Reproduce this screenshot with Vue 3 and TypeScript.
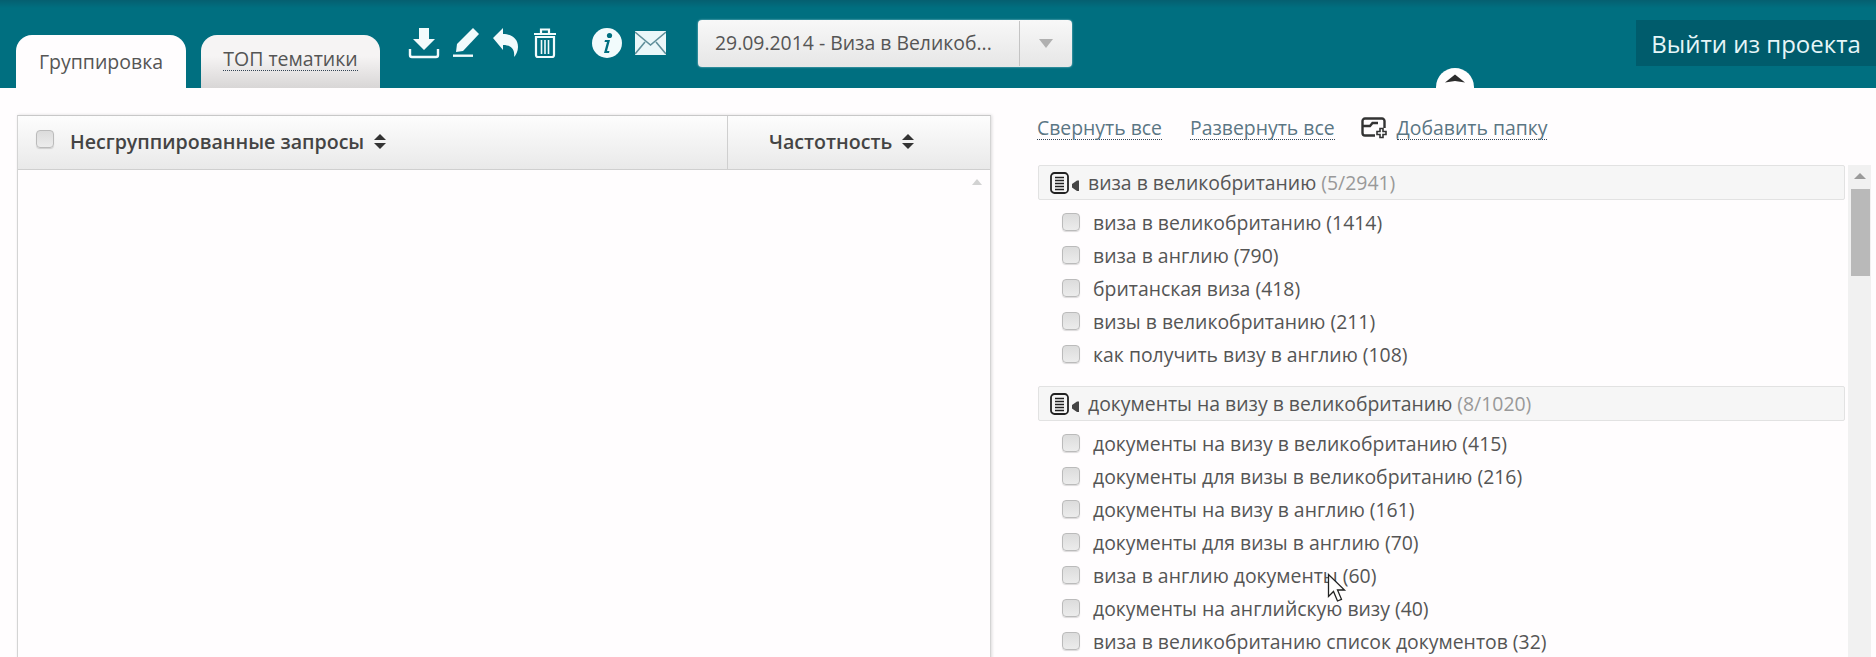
<script setup lang="ts">
interface Group {
  title: string;
  count: string;
  items: string[];
}

const groups: Group[] = [
  {
    title: 'виза в великобританию',
    count: '(5/2941)',
    items: [
      'виза в великобританию (1414)',
      'виза в англию (790)',
      'британская виза (418)',
      'визы в великобританию (211)',
      'как получить визу в англию (108)',
    ],
  },
  {
    title: 'документы на визу в великобританию',
    count: '(8/1020)',
    items: [
      'документы на визу в великобританию (415)',
      'документы для визы в великобританию (216)',
      'документы на визу в англию (161)',
      'документы для визы в англию (70)',
      'виза в англию документы (60)',
      'документы на английскую визу (40)',
      'виза в великобританию список документов (32)',
    ],
  },
];
</script>

<template>
  <div class="page">
    <header class="topbar">
      <nav class="tabs">
        <a class="tab active">Группировка</a>
        <a class="tab"><span class="dotted">ТОП тематики</span></a>
      </nav>

      <div class="tools">
        <svg width="32" height="32" viewBox="0 0 32 32" fill="#f2fbfc">
          <path d="M11 1h10v11h6L16 23 5 12h6z" />
          <path d="M2 22v6a2 2 0 0 0 2 2h24a2 2 0 0 0 2-2v-6" fill="none" stroke="#f2fbfc" stroke-width="2.4" />
        </svg>
        <svg width="28" height="32" viewBox="0 0 28 32" fill="#f2fbfc">
          <path d="M21 1l6 6L11 24l-7 1 1-8z" />
          <rect x="1" y="27.5" width="20" height="2.4" />
        </svg>
        <svg width="28" height="32" viewBox="0 0 28 32" fill="#f2fbfc">
          <path d="M1 11 11 1v6c9 0 15 5 15 13 0 4-2 8-4 10 1-7-2-12-11-12v5z" />
        </svg>
        <svg width="26" height="32" viewBox="0 0 26 32" fill="none" stroke="#f2fbfc" stroke-width="2.2">
          <path d="M2 7h22M9 6V2.500h8V6" />
          <path d="M4 10h18v18a2 2 0 0 1-2 2H6a2 2 0 0 1-2-2z" />
          <path d="M9.500 13v14M13 13v14M16.500 13v14" stroke-width="1.600" />
        </svg>
        <svg class="info" width="32" height="32" viewBox="0 0 32 32">
          <circle cx="16" cy="16" r="15" fill="#f2fbfc" />
          <circle cx="18.500" cy="8.500" r="2.600" fill="#006f80" />
          <path d="M14 13h5l-3 11h2.500l-.5 2h-5l3-11h-2.500z" fill="#006f80" />
        </svg>
        <svg class="mail" width="31" height="24" viewBox="0 0 31 24">
          <rect width="31" height="24" fill="#eaf7f9" />
          <path d="M0 1l15.500 13L31 1M0 23l10-12M31 23 21 11" fill="none" stroke="#5f8f9a" stroke-width="1.600" />
        </svg>
      </div>

      <div class="select">
        <span class="select-text">29.09.2014 - Виза в Великоб...</span>
        <span class="select-arrow"><i></i></span>
      </div>

      <a class="leave">Выйти из проекта</a>
      <span class="collapse">
        <svg width="20" height="9" viewBox="0 0 20 9"><path d="M0 8.500 10 .5l10 8-10-1.500z" fill="#2c2c2c" /></svg>
      </span>
    </header>

    <main class="content">
      <section class="queries">
        <div class="queries-head">
          <div class="col-name">
            <span class="check"></span>
            <b>Несгруппированные запросы</b>
            <span class="sort"></span>
          </div>
          <div class="col-freq">
            <b>Частотность</b>
            <span class="sort"></span>
          </div>
        </div>
        <div class="queries-body">
          <i class="up-arrow"></i>
        </div>
      </section>

      <section class="folders">
        <div class="actions">
          <a class="dotted">Свернуть все</a>
          <a class="dotted">Развернуть все</a>
          <span class="add">
            <svg width="28" height="22" viewBox="0 0 28 22" fill="none" stroke="#333" stroke-width="2.400">
              <path d="M14 18.500H4a2.500 2.500 0 0 1-2.500-2.500V4A2.500 2.500 0 0 1 4 1.500h17A2.500 2.500 0 0 1 23.500 4v7" />
              <path d="M1.500 9H9l2.500-3H17" />
              <path d="M19 11.500h3v3h3v3h-3v3h-3v-3h-3v-3h3z" stroke-width="1.600" fill="#fff" />
            </svg>
            <a class="dotted">Добавить папку</a>
          </span>
        </div>

        <div class="folders-scroll">
          <div class="list">
            <div v-for="group in groups" :key="group.title" class="group">
              <div class="group-head">
                <svg width="30" height="22" viewBox="0 0 30 22" fill="none" stroke="#222">
                  <rect x="1" y="1" width="17" height="20" rx="3.500" stroke-width="1.800" />
                  <path d="M5 5.500h9M5 8.500h9M5 11.500h9M5 14.500h9M5 17.500h9" stroke-width="1.300" />
                  <path d="M29 8.500v10.500h-2l-5-3.500v-3.500l5-3.500z" fill="#444" stroke="none" />
                </svg>
                <span>{{ group.title }} <em>{{ group.count }}</em></span>
              </div>
              <ul>
                <li v-for="item in group.items" :key="item">
                  <span class="check small"></span>
                  {{ item }}
                </li>
              </ul>
            </div>
          </div>
          <div class="scrollbar">
            <i class="up-arrow dark"></i>
            <div class="thumb"></div>
          </div>
        </div>
      </section>
    </main>

    <svg class="cursor" width="21" height="30" viewBox="0 0 21 30">
      <path d="M1.500 1.500v22l5-5 4 9.500 4-1.700-4-9.300h7z" fill="#fff" stroke="#222" stroke-width="1.300" />
    </svg>
  </div>
</template>

<style scoped>
.page {
  position: relative;
  width: 1876px;
  height: 657px;
  overflow: hidden;
  background: #fffdfe;
  font-family: "Open Sans", "Noto Sans", sans-serif;
  color: #555;
}

.topbar {
  position: relative;
  display: flex;
  align-items: flex-start;
  height: 88px;
  box-sizing: border-box;
  padding-left: 16px;
  background: linear-gradient(#055f70 0, #006f80 8px);
}

.tabs {
  display: flex;
  gap: 15px;
  margin-top: 35px;
}

.tab {
  display: flex;
  align-items: flex-start;
  justify-content: center;
  box-sizing: border-box;
  width: 170px;
  height: 53px;
  padding-top: 13px;
  border-radius: 16px 16px 0 0;
  font-size: 19.5px;
  color: #555;
  background: #fffdfe;
}

.tab:not(.active) {
  width: 179px;
  background: linear-gradient(#f6f4f4 40%, #d8d6d6);
}

.dotted {
  border-bottom: 1px dotted #345;
  line-height: 22px;
}

.tools {
  display: flex;
  align-items: center;
  gap: 12px;
  margin: 27px 0 0 28px;
}

.info {
  margin-left: 21px;
}

.select {
  display: flex;
  box-sizing: border-box;
  width: 374px;
  height: 47px;
  margin: 20px 0 0 32px;
  border-radius: 4px;
  background: linear-gradient(#f8f8f8, #e6e6e6);
  box-shadow: 0 0 2px rgb(210 240 245 / 80%);
  font-size: 19.4px;
  color: #555;
}

.select-text {
  flex: 1;
  padding-left: 17px;
  line-height: 46px;
  white-space: nowrap;
}

.select-arrow {
  display: flex;
  align-items: center;
  justify-content: center;
  flex: none;
  width: 52px;
  margin: 1px 0;
  border-left: 1px solid #c4c4c4;
}

.select-arrow i {
  border: 7px solid transparent;
  border-top: 9px solid #b0b0b0;
  border-bottom: 0;
}

.leave {
  display: flex;
  align-items: center;
  justify-content: center;
  width: 240px;
  height: 46px;
  margin: 20px 0 0 auto;
  background: #005c6c;
  color: #e6f6f8;
  font-size: 24px;
}

.collapse {
  position: absolute;
  left: 1436px;
  bottom: 0;
  display: flex;
  align-items: center;
  justify-content: center;
  width: 38px;
  height: 20px;
  border-radius: 19px 19px 0 0;
  background: #fffdfe;
}

.content {
  display: flex;
  align-items: flex-start;
}

.queries {
  box-sizing: border-box;
  width: 974px;
  height: 569px;
  margin: 27px 0 0 17px;
  border: 1px solid #d4d4d4;
  border-bottom: 0;
  border-top-color: #c8c8c8;
  box-shadow: 1px 0 3px rgb(0 0 0 / 14%);
}

.queries-head {
  display: flex;
  height: 53px;
  border-bottom: 1px solid #cfcfcf;
  background: linear-gradient(#fdfdfd, #e9e9e9);
  color: #444;
  font-size: 19.6px;
}

.queries-head b {
  font-weight: 600;
}

.col-name {
  display: flex;
  align-items: center;
  box-sizing: border-box;
  width: 710px;
  padding: 0 0 2px 18px;
  border-right: 1px solid #cfcfcf;
}

.col-name .check {
  margin: -6px 16px 0 0;
}

.col-freq {
  display: flex;
  flex: 1;
  align-items: center;
  padding: 0 0 2px 41px;
}

.sort {
  position: relative;
  width: 12px;
  height: 15px;
  margin-left: 10px;
}

.sort::before,
.sort::after {
  content: "";
  position: absolute;
  left: 0;
  border: 6px solid transparent;
}

.sort::before {
  top: 0;
  border-bottom: 6.500px solid #333;
  border-top: 0;
}

.sort::after {
  bottom: 0;
  border-top: 6.500px solid #333;
  border-bottom: 0;
}

.check {
  flex: none;
  box-sizing: border-box;
  width: 18px;
  height: 18px;
  border: 1px solid #bbb;
  border-radius: 4px;
  background: linear-gradient(#dcdcdc, #ececec);
  box-shadow: 0 1px 1px rgb(0 0 0 / 14%);
}

.queries-body {
  display: flex;
  justify-content: flex-end;
  padding: 9px 8px 0 0;
}

.up-arrow {
  display: block;
  width: 0;
  border: 5px solid transparent;
  border-bottom: 6px solid #d2d2d2;
  border-top: 0;
}

.up-arrow.dark {
  margin: 0 auto;
  border-width: 0 6px 6px;
  border-bottom-color: #9a9a9a;
}

.folders {
  flex: 1;
  padding: 25px 0 0 46px;
}

.actions {
  display: flex;
  align-items: center;
  gap: 28px;
  height: 30px;
  font-size: 19.4px;
  color: #5b7684;
}

.add {
  display: flex;
  align-items: center;
  gap: 8px;
  margin-left: -2px;
}

.folders-scroll {
  display: flex;
  gap: 3px;
  margin: 22px 0 0 1px;
}

.list {
  width: 807px;
}

.group-head {
  display: flex;
  align-items: center;
  box-sizing: border-box;
  height: 35px;
  padding-left: 11px;
  gap: 12px;
  border: 1px solid #e2e2e2;
  border-radius: 2px;
  background: #f6f6f6;
  font-size: 19.4px;
  color: #555;
}

.group-head svg {
  margin-right: -4px;
}

.group-head em {
  font-style: normal;
  color: #999;
}

ul {
  margin: 0;
  padding: 6px 0 15px 24px;
  list-style: none;
}

li {
  display: flex;
  align-items: center;
  gap: 8px;
  height: 33px;
  font-size: 19.4px;
  white-space: pre;
}

.check.small {
  margin-bottom: 2px;
}

.scrollbar {
  width: 23px;
  height: 492px;
  padding-top: 8px;
  box-sizing: border-box;
  background: #f1f1f1;
}

.thumb {
  height: 87px;
  margin: 10px 1px 0 3px;
  background: #b9b9b9;
}

.cursor {
  position: absolute;
  left: 1327px;
  top: 573px;
}
</style>
